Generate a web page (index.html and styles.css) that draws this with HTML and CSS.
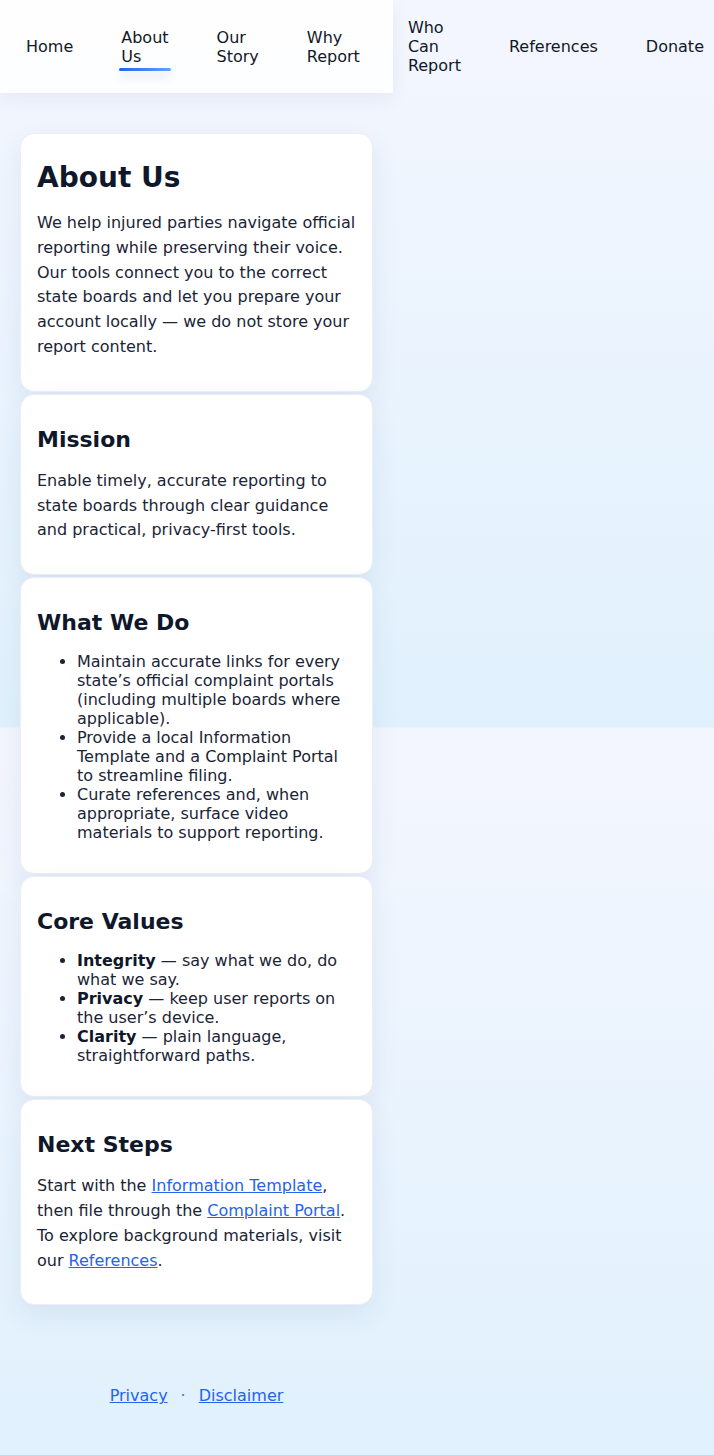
FILE: index.html
```html
<!DOCTYPE html>
<html lang="en">
<head>
<meta charset="utf-8">
<title>About Us</title>
<link rel="stylesheet" href="styles.css">
</head>
<body>
<div class="page">
  <header class="site-header">
    <nav class="nav">
      <a class="nav-link" href="#">Home</a>
      <a class="nav-link is-active" href="#">About Us</a>
      <a class="nav-link" href="#">Our Story</a>
      <a class="nav-link" href="#">Why Report</a>
      <a class="nav-link" href="#">Who Can Report</a>
      <a class="nav-link" href="#">References</a>
      <a class="nav-link" href="#">Donate</a>
    </nav>
  </header>

  <main class="main">
    <section class="card">
      <h1 class="card-title card-title--lg">About Us</h1>
      <p class="card-text">We help injured parties navigate official reporting while preserving their voice. Our tools connect you to the correct state boards and let you prepare your account locally — we do not store your report content.</p>
    </section>

    <section class="card">
      <h2 class="card-title">Mission</h2>
      <p class="card-text">Enable timely, accurate reporting to state boards through clear guidance and practical, privacy-first tools.</p>
    </section>

    <section class="card">
      <h2 class="card-title">What We Do</h2>
      <ul class="card-list">
        <li>Maintain accurate links for every state’s official complaint portals (including multiple boards where applicable).</li>
        <li>Provide a local Information Template and a Complaint Portal to streamline filing.</li>
        <li>Curate references and, when appropriate, surface video materials to support reporting.</li>
      </ul>
    </section>

    <section class="card">
      <h2 class="card-title">Core Values</h2>
      <ul class="card-list">
        <li><strong>Integrity</strong> — say what we do, do what we say.</li>
        <li><strong>Privacy</strong> — keep user reports on the user’s device.</li>
        <li><strong>Clarity</strong> — plain language, straightforward paths.</li>
      </ul>
    </section>

    <section class="card">
      <h2 class="card-title">Next Steps</h2>
      <p class="card-text">Start with the <a class="text-link" href="#">Information Template</a>, then file through the <a class="text-link" href="#">Complaint Portal</a>. To explore background materials, visit our <a class="text-link" href="#">References</a>.</p>
    </section>
  </main>

  <footer class="site-footer">
    <a class="text-link" href="#">Privacy</a><span class="sep">·</span><a class="text-link" href="#">Disclaimer</a>
  </footer>
</div>
</body>
</html>
```

FILE: styles.css
```css
html {
  background-color: #f4f6fe;
  background-image: linear-gradient(180deg, #f4f6fe 0%, #e0f1fd 100%);
  background-size: 100% 727.5px;
  background-repeat: repeat-y;
  min-height: 100%;
}

body {
  margin: 0;
  font-family: "DejaVu Sans", "Liberation Sans", sans-serif;
  font-size: 16px;
  color: #1a2436;
}

.page {
  width: 393px;
}

.site-header {
  background: rgba(255, 255, 255, 0.85);
  box-shadow: 0 6px 18px rgba(30, 41, 80, 0.06);
}

.nav {
  display: flex;
  align-items: center;
  gap: 44px;
  padding: 12.5px 0 12.5px 24px;
  height: 93px;
  box-sizing: border-box;
}

.nav-link {
  position: relative;
  display: block;
  flex: 0 1 auto;
  min-width: min-content;
  width: min-content;
  padding: 6px 2px;
  color: #111827;
  text-decoration: none;
  line-height: normal;
  white-space: normal;
}

.nav-link.is-active::after {
  content: "";
  position: absolute;
  left: 0;
  right: 0;
  bottom: 1px;
  height: 3px;
  border-radius: 2px;
  background: linear-gradient(90deg, #2563eb, #60a5fa);
  box-shadow: 0 5px 10px rgba(30, 58, 110, 0.2);
}

.main {
  display: flex;
  flex-direction: column;
  gap: 2px;
  padding: 40px 20px 40px;
}

.card {
  background: #ffffff;
  border: 1px solid #eceef3;
  border-radius: 14px;
  padding: 0 16px;
  box-shadow: 0 10px 28px rgba(30, 58, 110, 0.08);
}

.card-title {
  margin: 32px 0 0;
  font-size: 22px;
  font-weight: 700;
  line-height: normal;
  color: #0f172a;
}

.card-title--lg {
  margin-top: 27px;
  font-size: 28px;
}

.card-text {
  margin: 17px 0 31px;
  line-height: 1.55;
}

.card-list {
  margin: 17px 0 31px;
  padding-left: 40px;
  line-height: normal;
}

.card-list strong {
  color: #0f172a;
}

.text-link {
  color: #2563eb;
  text-decoration: underline;
}

.site-footer {
  padding: 41px 0 49px;
  text-align: center;
  line-height: normal;
}

.sep {
  margin: 0 13px;
  color: #64748b;
}
```
